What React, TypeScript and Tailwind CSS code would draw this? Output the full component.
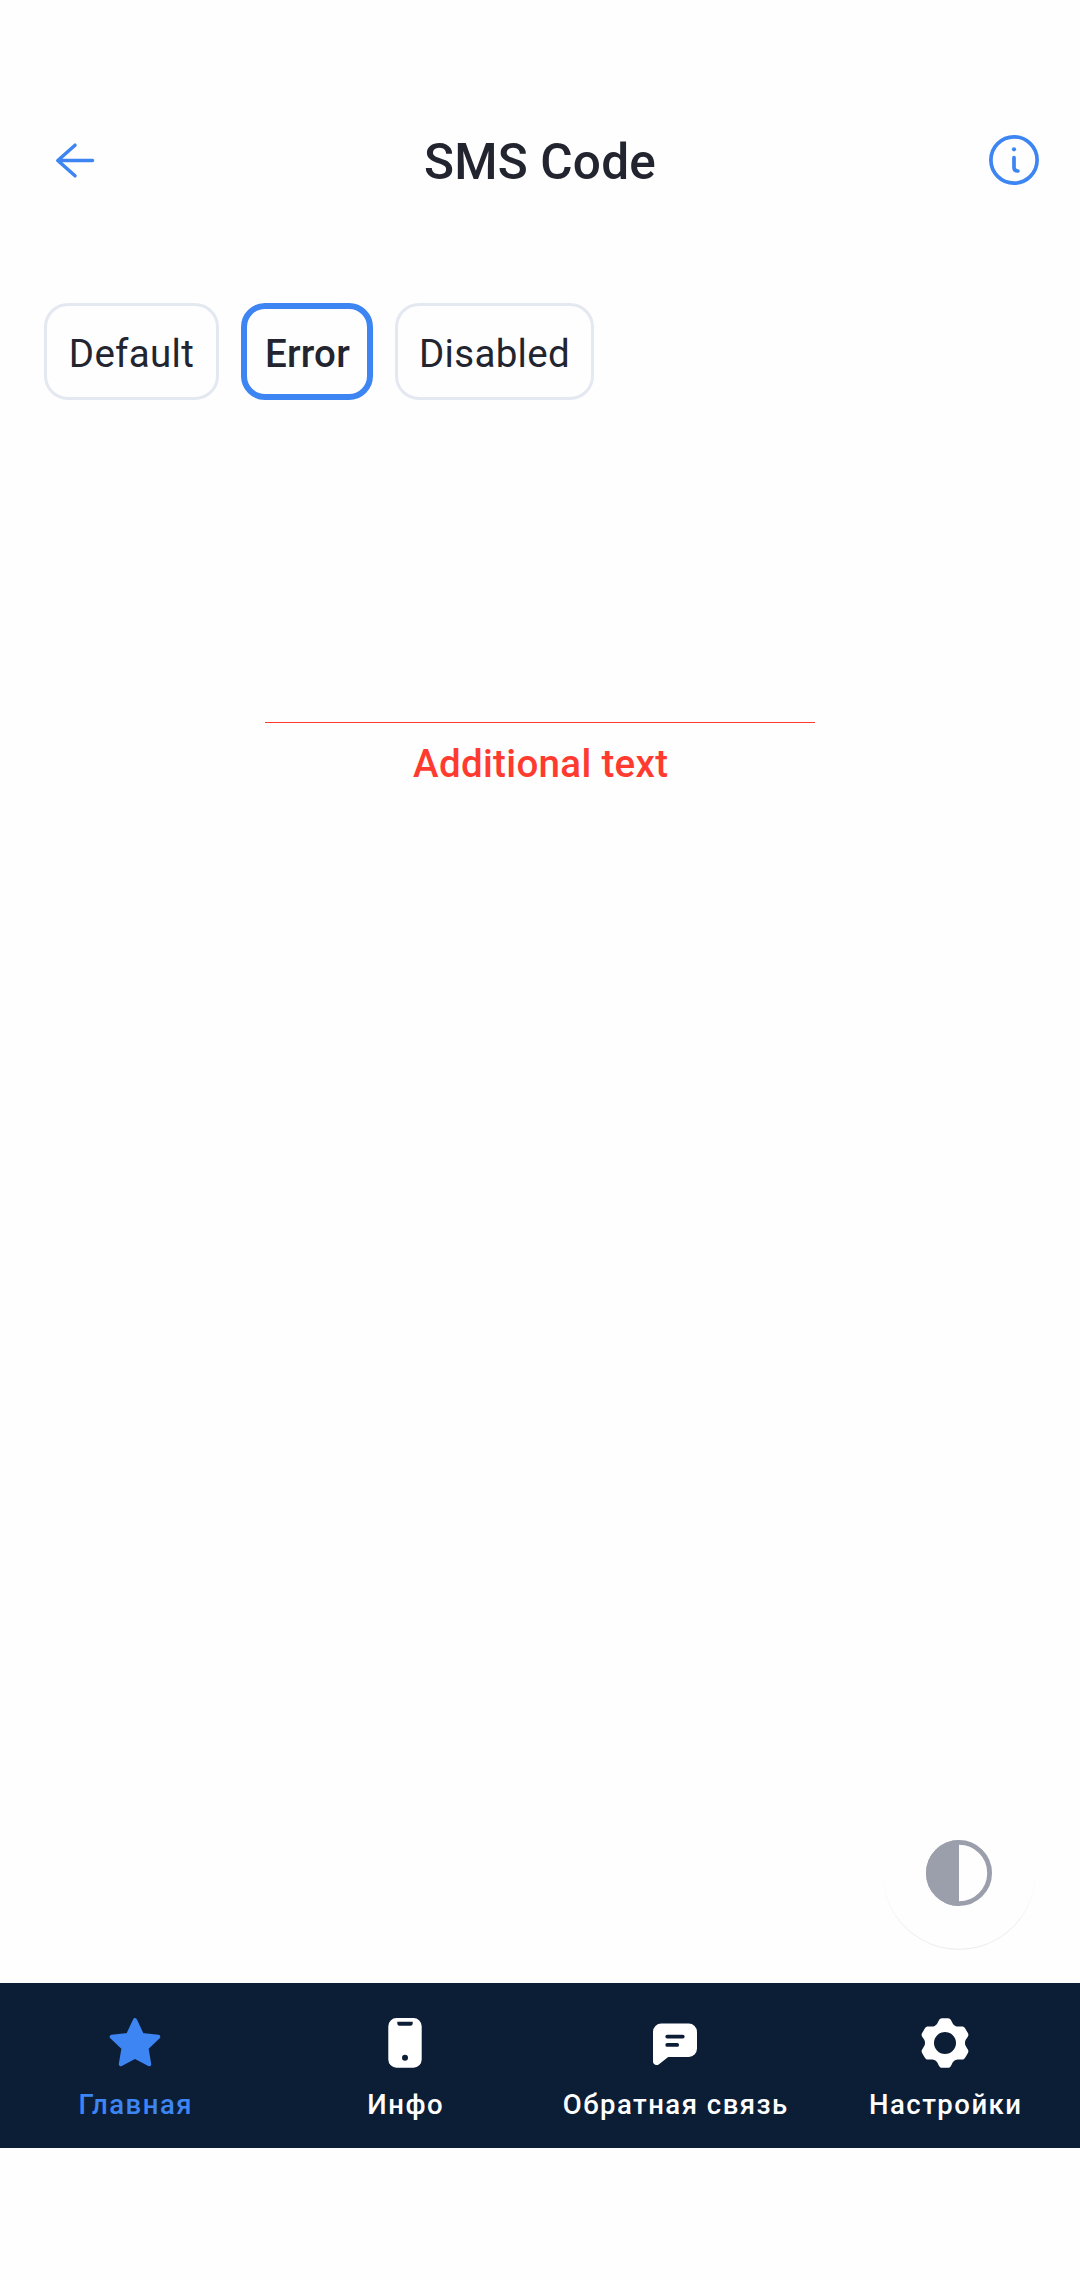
import type { ReactNode } from "react";

const WEDGE: [number, number][] = [
  [-7.9, -18.5], [-7.5, -20], [-6.7, -21.4],
  [-5.6, -23.8], [-4.8, -24.8], [-2.8, -24.8],
  [-1, -24.8], [1, -24.8], [2.8, -24.8],
  [4.8, -24.8], [5.6, -23.8], [6.7, -21.4],
  [7.5, -20], [7.9, -18.5], [10, -17.3],
];

function gearPath() {
  const turn = ([x, y]: [number, number], deg: number) => {
    const a = (deg * Math.PI) / 180;
    const px = 33 + x * Math.cos(a) - y * Math.sin(a);
    const py = 33 + x * Math.sin(a) + y * Math.cos(a);
    return `${px.toFixed(2)} ${py.toFixed(2)}`;
  };
  let d = `M${turn([-10, -17.3], 0)}`;
  for (let i = 0; i < 6; i++) {
    for (let j = 0; j < WEDGE.length; j += 3) {
      d += `C${turn(WEDGE[j], i * 60)} ${turn(WEDGE[j + 1], i * 60)} ${turn(WEDGE[j + 2], i * 60)}`;
    }
  }
  return d + "ZM33 22a11 11 0 1 0 0 22a11 11 0 1 0 0-22Z";
}

function BackIcon() {
  return (
    <svg viewBox="0 0 66 66" className="size-[66px]" fill="none" stroke="#3d85f2" strokeWidth="3.5" strokeLinecap="round" strokeLinejoin="round">
      <path d="M50.5 33.5H16M33 18.2L15.8 33.5L33 48.8" />
    </svg>
  );
}

function InfoIcon() {
  return (
    <svg viewBox="0 0 66 66" className="size-[66px]" fill="none" stroke="#3d85f2" strokeLinecap="round">
      <circle cx="33" cy="33" r="23.1" strokeWidth="3.7" />
      <circle cx="33" cy="22.3" r="2.1" fill="#3d85f2" stroke="none" />
      <path d="M33 30.5V40.5Q33 44 36.9 44" strokeWidth="3.7" />
    </svg>
  );
}

function StarIcon() {
  return (
    <svg viewBox="0 0 66 66" className="size-[66px]" fill="currentColor" stroke="currentColor" strokeWidth="4" strokeLinejoin="round">
      <path d="M33 10L40 25L56.3 26.8L44.5 38L47.2 54.2L33 46.8L18.8 54.2L21.5 38L9.7 26.8L26 25Z" />
    </svg>
  );
}

function PhoneIcon() {
  return (
    <svg viewBox="0 0 66 66" className="size-[66px]" fill="currentColor" fillRule="evenodd">
      <path d="M24.5 8H41.5A8.2 8.2 0 0 1 49.7 16.2V49.5A8.2 8.2 0 0 1 41.5 57.7H24.5A8.2 8.2 0 0 1 16.3 49.5V16.2A8.2 8.2 0 0 1 24.5 8ZM25.3 11.7V13.5Q25.3 15.7 27.5 15.7H38.5Q40.7 15.7 40.7 13.5V11.7ZM33 44.7a3 3 0 1 0 0 6a3 3 0 1 0 0-6Z" />
    </svg>
  );
}

function FeedbackIcon() {
  return (
    <svg viewBox="0 0 66 66" className="size-[66px]" fill="currentColor">
      <path d="M19.3 13.6H46.7A8.3 8.3 0 0 1 55 21.9V38.6A8.3 8.3 0 0 1 46.7 46.9H26.2L17 54.2C14.5 56 11 54.8 11 51.5V21.9A8.3 8.3 0 0 1 19.3 13.6Z" />
      <path d="M25.2 26.6H40.8M25.2 34.9H35.2" stroke="#0c1e36" strokeWidth="3.7" strokeLinecap="round" />
    </svg>
  );
}

function GearIcon() {
  return (
    <svg viewBox="0 0 66 66" className="size-[66px]" fill="currentColor" fillRule="evenodd">
      <path d={gearPath()} />
    </svg>
  );
}

function Tab({ label, active, children }: { label: string; active?: boolean; children: ReactNode }) {
  return (
    <a className={`flex flex-1 flex-col items-center pt-[27px] ${active ? "text-[#3d85f2]" : "text-white"}`}>
      {children}
      <span className="mt-[12px] pl-[1.5px] whitespace-nowrap text-[27.5px] leading-[33px] font-medium tracking-[1.5px]">{label}</span>
    </a>
  );
}

export default function App() {
  return (
    <div className="relative flex h-[2280px] w-[1080px] flex-col bg-[#fefefe] font-['Roboto',sans-serif] text-[#22252f]">
      <header className="mt-[94px] flex h-[132px] items-center justify-between px-[33px]">
        <div className="flex w-[99px] pl-[9px]"><BackIcon /></div>
        <h1 className="pt-[3px] text-[49.5px] leading-[60px] font-medium tracking-[0.2px]">SMS Code</h1>
        <div className="flex w-[99px] justify-end"><InfoIcon /></div>
      </header>

      <div className="mt-[77px] flex gap-[22px] pl-[44px] text-[38.5px] leading-[50px] tracking-[0.3px]">
        <button className="h-[97px] w-[175px] rounded-[24px] border-[3px] border-[#e4e8f0] pt-[5px]">Default</button>
        <button className="h-[97px] w-[132px] rounded-[24px] border-[6px] border-[#3d85f2] pt-[5px] pl-px font-medium tracking-[0.2px]">Error</button>
        <button className="h-[97px] w-[199px] rounded-[24px] border-[3px] border-[#e4e8f0] pt-[5px]">Disabled</button>
      </div>

      <main className="flex flex-1 flex-col items-center pt-[322px]">
        <div className="h-px w-[550px] bg-[#ff3b30]" />
        <p className="mt-[16px] pl-[1.5px] text-[38.5px] leading-[50px] font-medium tracking-[0.33px] text-[#ff3b30]">Additional text</p>
      </main>

      <nav className="mb-[132px] flex h-[165px] bg-[#0c1e36]">
        <Tab label="Главная" active><StarIcon /></Tab>
        <Tab label="Инфо"><PhoneIcon /></Tab>
        <Tab label="Обратная связь"><FeedbackIcon /></Tab>
        <Tab label="Настройки"><GearIcon /></Tab>
      </nav>

      <button className="absolute right-[44px] bottom-[330px] flex size-[154px] items-center justify-center rounded-full">
        <svg viewBox="0 0 154 154" className="size-[154px]" fill="none">
          <defs>
            <linearGradient id="rim" x1="0" y1="77" x2="0" y2="154" gradientUnits="userSpaceOnUse">
              <stop offset="0" stopColor="#000" stopOpacity="0" />
              <stop offset="1" stopColor="#000" stopOpacity="0.07" />
            </linearGradient>
          </defs>
          <path d="M0.7 77A76.3 76.3 0 0 0 153.3 77" stroke="url(#rim)" strokeWidth="1.2" />
          <circle cx="77" cy="77" r="30.6" stroke="#9b9fab" strokeWidth="4.8" />
          <path d="M77 44A33 33 0 0 0 77 110Z" fill="#9b9fab" />
        </svg>
      </button>
    </div>
  );
}
